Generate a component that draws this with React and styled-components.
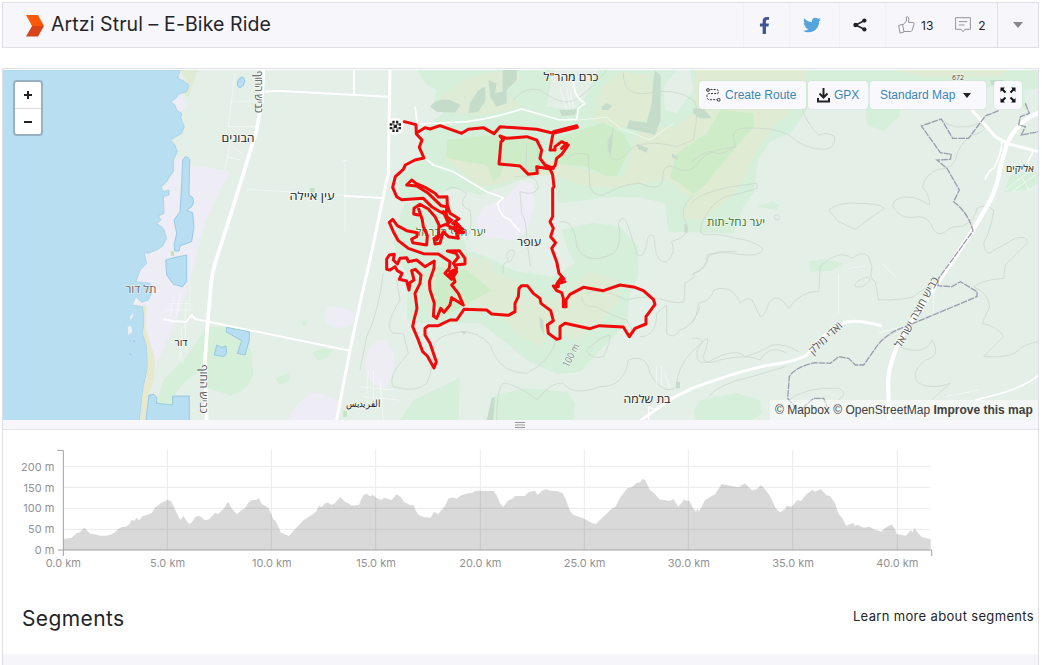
import React from "react";
import styled, { createGlobalStyle } from "styled-components";
import { FaFacebookF, FaTwitter } from "react-icons/fa";

const GlobalStyle = createGlobalStyle`
  * {
    box-sizing: border-box;
  }

  body {
    margin: 0;
    background: #fff;
    color: #242428;
    font-family: Inter, "Liberation Sans", sans-serif;
  }
`;

const Page = styled.div`
  width: 1037px;
  height: 665px;
  margin-left: 2px;
  padding-top: 2px;
  overflow: hidden;
`;

const Header = styled.header`
  display: flex;
  height: 46px;
  background: #f7f7fb;
  border: 1px solid #dfdfe8;
`;

const Brand = styled.div`
  display: flex;
  flex: 1;
  align-items: center;
  padding: 0 0 3px 22px;

  svg {
    position: relative;
    top: 2px;
  }
`;

const Title = styled.h1`
  margin: 0 0 0 6px;
  font-size: 19.5px;
  font-weight: 400;
  line-height: 24px;
  letter-spacing: 0.1px;
  white-space: nowrap;
`;

const Action = styled.div`
  display: flex;
  align-items: center;
  justify-content: center;
  width: ${props => props.w}px;
  padding-right: ${props => props.shift || 0}px;
  border-left: 1px solid ${props => (props.strong ? "#dfdfe8" : "#f0f0f5")};
`;

const Kudos = styled(Action)`
  justify-content: flex-start;
  padding-left: 12px;
  font-size: 12px;

  svg + span {
    margin: 0 22px 0 6px;
  }

  svg ~ svg + span {
    margin: 0 0 0 7px;
  }
`;

const Panel = styled.section`
  margin-top: 20px;
  border: 1px solid #dfdfe8;
  border-bottom: 0;
`;

const MapBox = styled.div`
  position: relative;
  height: 351px;
  padding-top: 1px;

  > svg {
    display: block;
  }
`;

const ZoomControl = styled.div`
  position: absolute;
  top: 11px;
  left: 10px;
  width: 30px;
  background: #fff;
  border: 2px solid #96b1bf;
  border-radius: 4px;
`;

const ZoomButton = styled.div`
  display: flex;
  align-items: center;
  justify-content: center;
  height: 26px;
  border-top: ${props => (props.line ? "1px solid #ddd" : "0")};
`;

const MapTools = styled.div`
  position: absolute;
  top: 12px;
  right: 16px;
  display: flex;
`;

const ToolButton = styled.div`
  display: flex;
  align-items: center;
  width: ${props => props.w}px;
  height: 28px;
  margin-left: ${props => props.gap || 2}px;
  padding-left: ${props => props.pad}px;
  background: #f9f9fd;
  border-radius: 3px;
  box-shadow: 0 0 1px rgba(120, 130, 160, 0.4);
  color: #3a85b8;
  font: 12px "Liberation Sans", sans-serif;
  white-space: nowrap;

  svg + span {
    margin-left: 4px;
  }

  span + svg {
    margin-left: 8px;
  }
`;

const Attribution = styled.div`
  position: absolute;
  right: 0;
  bottom: 0;
  width: 268px;
  height: 20px;
  padding-left: 5px;
  background: rgba(255, 255, 255, 0.5);
  color: #404040;
  font: 12px/20px "Liberation Sans", sans-serif;
  white-space: nowrap;
`;

const Handle = styled.div`
  display: flex;
  align-items: center;
  justify-content: center;
  height: 10px;
  padding-right: 2px;
  background: #f7f7fb;
  border-bottom: 1px solid #e4e4ec;
`;

const Segments = styled.div`
  display: flex;
  justify-content: space-between;
  height: 74px;
  padding: 25px 4px 0 19px;
`;

const SegmentsTitle = styled.h2`
  margin: 0;
  font-size: 21px;
  font-weight: 400;
  line-height: 28px;
  letter-spacing: 0.4px;
`;

const LearnMore = styled.a`
  font-size: 13px;
  line-height: 22px;
  letter-spacing: 0.34px;
`;

const Footer = styled.div`
  height: 20px;
  background: #f6f6fa;
`;

const FullscreenIcon = () => (
  <svg width="16" height="16" viewBox="0 0 16 16" stroke="#111" strokeWidth="2" fill="#111">
    <path d="M2 2L5.5 5.5M14 2L10.5 5.5M2 14L5.5 10.5M14 14L10.5 10.5" />
    <path stroke="none" d="M.5 .5h4.5L.5 5zM15.5 .5h-4.5l4.5 4.5zM.5 15.5h4.5l-4.5-4.5zM15.5 15.5h-4.5l4.5-4.5z" />
  </svg>
);

const RouteIcon = () => (
  <svg width="15" height="14" viewBox="0 0 15 14" fill="none" stroke="#333" strokeWidth="1">
    <circle cx="2" cy="2" r="1.4" />
    <circle cx="12.7" cy="11.8" r="1.4" />
    <path strokeDasharray="2 1.2" d="M4.5 1.5H11Q13 2 12 5.5H3Q.5 6 1 9Q1 11 3 11.7H11" />
  </svg>
);

const DownloadIcon = () => (
  <svg width="13" height="15" viewBox="0 0 13 15" fill="none" stroke="#222" strokeWidth="2">
    <path d="M6.5 0V9.5M2.5 5.5L6.5 9.5L10.5 5.5" />
    <path d="M1 10V13.5H12V10" />
  </svg>
);

const ShareIcon = () => (
  <svg width="14" height="14" viewBox="0 0 15 15" fill="#222">
    <path d="M12 3L3 7.5L12 12" fill="none" stroke="#222" strokeWidth="1.7" />
    <circle cx="12.2" cy="2.8" r="2.3" />
    <circle cx="2.8" cy="7.5" r="2.5" />
    <circle cx="12.2" cy="12.2" r="2.3" />
  </svg>
);

const ThumbIcon = () => (
  <svg width="17" height="18" viewBox="0 0 17 18" fill="none" stroke="#94949a" strokeWidth="1">
    <path d="M.7 9.5L4.5 8.3L6 16L2 17.2ZM4.8 9L8.5 5L8.2 1.2Q9 .2 10.3 1.3Q11.3 3 10.5 6.4H15.2Q16.4 6.8 16 8.3L14 14.6Q13.5 15.5 12.5 15.5H6" />
  </svg>
);

const CommentIcon = () => (
  <svg width="16" height="16" viewBox="0 0 16 16" fill="none" stroke="#94949a" strokeWidth="1">
    <path d="M.6 .7H15.4V12.3H10L8 14.7L6 12.3H.6ZM3.8 4.6H12.2M3.8 8H9.5" />
  </svg>
);

// terrain is drawn at three units per pixel, one frame per sheet
const Sheet = ({ x, y, children }) => (
  <g transform={`translate(${x} ${y}) scale(${1 / 3})`}>{children}</g>
);

const Coast = () => (
  <Sheet x={0} y={140}>
    <path fill="#eeecf4" d="M525 60L550 50L570 75L620 80L690 95L660 150L620 240L590 340L570 420L555 470L520 560L480 650L465 670L450 600L430 580L430 500L400 495L408 470L408 425L420 390L430 330L490 320L490 290L470 240L480 160L520 100Z" />
    <path fill="#eeecf4" d="M980 550Q980 515 1010 505Q1045 500 1065 530Q1060 560 1030 562Q1000 565 980 550ZM865 840Q880 790 940 757Q1000 770 1030 790L1012 840ZM512 -115L530 -140L550 -130L560 -100L540 -80Z" />
    <path fill="#dfead2" d="M540 -210H592L580 -170L565 -130L550 -140L567 -165Z" />
    <path fill="#d5efd8" d="M470 790L490 720L560 650L600 590L622 560L615 680L560 720L518 768V795ZM622 560L730 560L755 640L760 700Q740 760 690 765L622 745ZM935 640L970 625L1000 630L985 650L955 662ZM825 715L870 698L865 725L840 735ZM905 545L920 540V555L908 558Z" />
    <path fill="#c2e4bd" d="M930 144H944V158H930ZM512 335L522 332V348H514ZM1030 812H1040V830H1030Z" />
    <path fill="#b7def1" stroke="#9dcbe3" strokeWidth="2" d="M0 -210H540L533 -185L550 -178L567 -165L560 -145L535 -138L528 -125L512 -115L525 -105L530 -90L545 -80L543 -65L553 -40L545 -20L520 -5L512 0L525 15L532 35L520 60V95L508 110L500 125L483 140L490 155L507 150V165L490 170L492 220L475 228L483 240L470 250L490 265L500 295L488 318L470 330L445 340L432 338L440 370L420 390L408 425L450 430L455 460L445 480L425 487L408 472L398 495L428 500L432 540L428 580L440 620L443 680L430 740L425 790L418 845H0Z" />
    <path fill="#e6e9cd" d="M430 492L440 500L436 560L450 610L464 650L462 720L447 760L435 840H420L428 760L443 690L442 620L430 585L434 540Z" />
    <path fill="#f0f0f4" d="M390 530L402 518L397 532L390 540ZM383 560L393 558L397 575L385 585ZM398 495L408 472L425 490Z" />
    <g fill="#b7def1" stroke="#7fbbdf" strokeWidth="2">
      <path d="M548 60Q558 42 569 58L567 165Q590 175 575 200L560 212L578 218L582 260L575 305L540 318L537 333L524 333L522 315L530 280L522 240L540 215L545 130Z" />
      <path d="M497 360L525 352L560 345V425L548 440L520 433L500 405Z" />
      <path d="M447 765L462 763L470 772V790L518 795V768H568V845H437Z" />
      <path d="M680 562L748 575V600L735 645L712 640L725 602L678 575ZM650 615L664 622L678 618L680 640L672 650L643 645Z" />
      <ellipse cx="723" cy="-173" rx="10" ry="16" transform="rotate(20 723 -173)" />
      <path d="M389 602L394 605M400 600L405 607M388 640L395 645" />
    </g>
    <g fill="none" stroke="#fff">
      <path strokeWidth="2" opacity=".7" d="M740 148L1035 166M1035 60V275M1026 62H1042M705 -200L685 -40M690 -115H790M685 -40H770M690 10L675 90M700 20L725 40M680 50L720 60M520 470L510 530M540 460L530 530M560 480L555 540M500 490H570M495 510H580M545 560L540 660M555 550L560 640M535 600L550 670M570 430V510" />
      <path strokeWidth="6" d="M490 538L520 544L558 545L575 525L585 537L630 546L1050 632M795 -145L830 -148L1165 -130M1062 -210V-135M1035 168L1150 174" />
      <circle cx="1036" cy="168" r="4" fill="#fff" />
      <path strokeWidth="11" strokeLinejoin="round" d="M790 -210L786 -120L770 -30L735 85L690 230L645 370Q632 420 631 460L622 560L615 660L620 845" />
      <path strokeWidth="9" strokeLinejoin="round" d="M1170 -210L1165 100L1148 180L1110 360L1080 490L1050 630L1010 840" />
    </g>
  </Sheet>
);

const Hills = () => (
  <Sheet x={340} y={60}>
    <path fill="#d5efdb" d="M230 30L260 75L290 90L280 130L310 160L255 200L240 300L175 350L180 410L260 440L300 400L345 385L420 405L540 360L640 340L655 430L740 420L800 410L900 412L975 430L985 515L1180 520L1210 440L1240 400L1255 300L1290 245L1350 220L1400 150L1430 80H1970L2060 150L2050 90L2096 85V30H980L960 70L990 140L1010 100L1080 30Z" />
    <path fill="#e4efe8" d="M640 30H775L730 120L700 150L620 140ZM970 80L1010 30H1050L1060 90L1010 160L975 150ZM1420 90H1960V260H1400Z" />
    <path fill="#d5efdb" d="M1576 130H1684L1676 170L1631 212L1581 195ZM195 430L320 410L360 490L380 570L440 590L520 632L640 650L705 610L680 560L665 510L760 488L840 500L895 560L895 650L870 700L860 790L790 860L720 935L650 942L560 900L500 850L420 790L250 790L200 780L205 650L180 600L160 550L175 480Z" />
    <path fill="#dfecd5" d="M380 590L450 600L465 640L535 660L520 740L580 700L640 720L700 670L750 635L830 660L840 720L770 800L700 840L640 800L600 860L540 830L460 750L380 745L260 740L250 640ZM300 110L370 60L430 40L530 30L545 60L480 90L550 140L440 165L330 160Z" />
    <path fill="#dfecd3" d="M310 290L440 280L640 300L760 340L850 350L880 260L900 200L1010 200L1070 150L1060 60L1070 30H1400L1380 130L1300 200L1250 270L1200 380L1150 430L1090 480L1030 475L1050 410L980 360L900 370L820 385L720 375L640 345L560 350L480 370L420 380Z" />
    <path fill="#dfecd3" d="M785 80L850 35L920 45L940 110L920 180L830 205L760 180ZM1620 20H2010L1980 50H1750Z" />
    <path fill="#ceecc7" d="M320 240L460 225L600 240L610 320L580 340L520 315L490 320L480 350L460 362L440 315L320 295ZM640 240L720 210L790 188L850 220L872 260L830 350L790 345L740 320L640 310ZM990 350L1010 280L1100 220L1140 150L1240 160L1240 200L1190 260L1130 330L1100 370L1060 402ZM290 620L380 630L455 690L370 740L300 770L280 700Z" />
    <path fill="#c6dccb" d="M945 32L962 45V180L945 225L925 220L860 205L868 180L920 188L935 130L940 60ZM415 90L435 80L437 120L415 155L385 160L390 130ZM445 60L470 70L465 100L488 95V30H530V60L500 90V130L470 140L450 110ZM270 140Q290 112 330 120L362 135L345 158L290 155ZM785 140L800 130L817 138L805 150H785ZM890 252L925 265L920 278L895 268ZM1058 145L1090 145L1115 175H1080L1060 160ZM658 150L710 148L705 165L665 168ZM803 240L818 220L812 285L803 270ZM995 280L1013 290V300L997 293ZM598 770L610 780L612 825L600 800ZM440 1080L455 1015L475 1005V1050L460 1080ZM1008 965H1020V985H1008ZM1033 490L1043 500V520L1033 515ZM363 812L380 815L372 824ZM1950 60H1990V75H1955Z" />
    <path fill="#eeecf4" d="M410 475L430 440L490 420L545 365L580 370L582 440L560 510L520 542L440 530L412 500ZM75 910Q90 835 130 840Q165 860 163 910Q155 975 125 985Q80 970 75 910ZM-40 740L20 745L42 760L40 785L15 795L-45 785Z" />
    <path fill="#d5efdb" d="M460 1080L465 1005L560 985L680 995L705 1030L700 1080ZM180 1080L220 1020L360 955L355 1080ZM1060 1055L1080 1020L1190 1000L1260 1020L1265 1060L1230 1085H1070Z" />
    <g fill="none" stroke="#c8d6ca" strokeWidth="2.2">
      <path d="M130 640Q115 760 80 830L60 930M170 660L180 720Q130 800 160 820H190L205 880Q140 950 160 980Q230 1000 260 970Q280 930 280 860Q290 820 380 815Q450 830 460 880Q490 940 560 940Q640 900 650 830" />
      <path d="M320 390Q340 370 380 400Q350 440 390 450Q400 500 380 540M560 250L558 330L600 330L590 260M525 350Q590 340 595 380Q590 410 540 395L545 460Q560 480 560 540L572 620M490 640Q485 600 510 605Q530 580 520 570Q490 570 505 605" />
      <path d="M470 1080Q470 960 500 970Q560 990 590 1020Q640 960 670 970Q700 1010 780 980Q855 980 865 900Q920 880 930 940Q970 1010 1010 980Q1010 920 1060 870L1100 835Q1110 830 1090 890Q1090 920 1140 900Q1220 880 1260 900Q1290 850 1340 880M520 120Q550 80 600 90Q680 150 720 110Q760 80 800 30M850 40Q850 110 920 100Q1000 80 1060 120Q1080 140 1060 240L1010 260Q940 240 880 260Q830 320 810 290L820 200" />
      <path d="M680 300Q700 270 745 285L750 380Q760 410 790 405Q850 370 900 370Q970 400 968 350Q970 310 1000 320Q1050 350 1080 300Q1100 270 1190 260M660 485Q705 480 710 560Q740 620 820 580Q850 550 835 490Q850 455 865 500L890 580Q910 610 925 530Q945 510 945 560Q950 610 980 605Q1010 580 995 545Q1050 530 1040 490Q1010 450 1060 405M725 710Q725 745 770 740Q820 770 860 780Q890 820 860 830M735 700Q780 680 860 720Q920 700 990 725Q1020 730 1032 725L1035 670Q1070 650 1060 640Q1100 630 1105 590Q1130 570 1190 575M900 830Q950 830 950 760L980 735V820Q1000 840 1020 810Q1060 800 1080 740M740 870Q780 830 810 825Q810 850 790 890Q750 900 740 870" />
    </g>
    <g fill="none" stroke="#fff" strokeLinejoin="round">
      <path strokeWidth="2" opacity=".8" d="M710 180L800 172L840 205L930 240L1000 190M660 80L680 150M680 80L690 145M690 90L700 140M85 930L80 1000M100 930V1040M120 960L130 1080M60 980L160 990M70 1010L180 1020M950 920V980M965 915V975M975 940L990 980" />
      <path strokeWidth="5" d="M240 192L380 185Q470 172 545 147L660 180L710 178L715 145L735 130Q700 110 700 60M250 290L280 315L340 335L440 395L490 413L472 430Q480 470 510 480L540 515M225 140L232 190" />
    </g>
  </Sheet>
);

const Plain = () => (
  <Sheet x={692} y={100}>
    <path fill="#d5efdb" d="M350 485L390 478L455 490L420 512L355 515ZM195 320L240 303L262 315L255 330ZM935 275L955 225L1040 215V250L1000 270Z" />
    <g fill="none" stroke="#c8d6ca" strokeWidth="2.2">
      <path d="M0 185Q50 140 70 160Q100 165 130 135Q110 90 150 85Q250 80 290 105Q340 150 400 148Q430 145 428 110Q410 95 380 105Q350 80 330 25" />
      <path d="M410 330Q440 305 500 310Q560 310 578 325L540 350L490 388L440 365ZM740 55Q790 100 860 70L878 85Q870 100 840 105Q800 130 790 180Q780 205 740 208Q700 220 692 260Q715 290 712 315Q660 280 620 295Q590 310 610 330Q630 360 680 350Q710 350 725 390Q740 410 760 395Q780 375 810 380Q850 360 855 325Q880 310 905 330Q900 380 875 430Q880 460 890 460L970 415Q1010 405 1005 430L975 460L940 495L935 535Q870 540 845 560Q890 580 893 620L870 670Q920 680 935 710L875 770Q960 775 980 750Q1000 730 1040 725" />
      <path d="M0 525Q50 500 45 465Q70 455 120 460Q210 475 213 445Q180 420 130 415Q90 400 40 405Q10 400 40 350Q60 310 100 290Q150 280 195 265V250Q100 260 60 275Q10 290 0 310M0 670Q15 650 20 610Q60 600 65 570Q120 550 145 610Q160 590 180 600L205 650Q215 655 230 610Q250 580 275 605L290 625Q330 570 380 575L385 500Q440 445 480 475Q510 450 530 470L540 500Q530 540 550 545L560 600Q640 600 665 590Q700 560 720 560" />
      <path d="M0 715Q50 710 15 750Q10 800 50 785Q130 740 160 770Q200 760 240 735Q280 730 320 755M490 560Q480 545 530 530Q540 545 510 560ZM620 740Q700 770 720 720Q750 770 700 780Q650 820 680 850Q720 870 775 850Q740 880 720 900M50 890Q80 850 180 830L280 800M290 900Q340 860 440 865Q470 880 440 900" />
      <circle cx="255" cy="352" r="8" />
    </g>
    <g fill="none" stroke="#fff" strokeLinejoin="round">
      <path strokeWidth="2" opacity=".8" d="M470 505L520 498M440 520V640M725 560V640M760 890L860 870M570 490L610 530M560 700Q580 690 640 680M940 270L1010 215M960 275L1030 225M990 230L1010 270" />
      <path strokeWidth="5" d="M930 120Q930 160 905 205Q885 215 880 240M1025 152L1005 190M850 900L920 882Q1000 860 1040 825" />
      <path strokeWidth="9" d="M840 30L910 110L945 130L1040 155M-155 962L-60 895L0 865Q120 820 220 797Q310 785 345 765Q390 700 450 670Q490 655 570 678" />
      <path strokeWidth="4" d="M-130 960V920L-110 930" />
      <path strokeWidth="13" d="M1040 38Q980 60 945 130L925 200Q915 270 890 310L843 390L740 545L640 690Q590 780 588 850L592 962" />
    </g>
    <path fill="none" stroke="#9a9dad" strokeWidth="4" strokeDasharray="20 3" d="M920 32L880 48L830 115H782L748 57L688 78L745 158L778 163L775 178L735 180L765 205L802 270L785 305Q830 340 843 393L740 535L738 557L780 560L805 545L855 575V590L640 680Q580 700 550 745L515 795H490L470 775L440 770L415 790L370 788Q310 800 292 830L287 895L320 935L365 895H395L405 920M1000 10L1012 40L985 50L980 75L1000 80L988 105L1040 95" />
  </Sheet>
);

const Ride = () => (
  <Sheet x={340} y={60}>
    <circle cx="166" cy="199" r="25" fill="#fff" />
    <g fill="#222" transform="translate(166 199)">
      <path d="M-9 -17H-2V-10H-9ZM2 -17H9V-10H2ZM-9 10H-2V17H-9ZM2 10H9V17H2ZM-17 -9H-10V-2H-17ZM-17 2H-10V9H-17ZM10 -9H17V-2H10ZM10 2H17V9H10ZM-5 -5H5V5H-5Z" />
      <path d="M-10 -10L-3 -10L-3 -4L-10 -3ZM10 -10L3 -10L3 -4L10 -3ZM-10 10L-3 10L-3 4L-10 3ZM10 10L3 10L3 4L10 3Z" opacity=".55" />
    </g>
    <g fill="none" stroke="#f00a0a" strokeWidth="9" strokeLinejoin="round" strokeLinecap="round">
      <path d="M193 185L228 194L229 222L246 240L238 262L252 294L225 300L196 315L190 328L166 350L158 382L170 410L185 419L250 415L275 440L300 455L320 465L325 485" />
      <path d="M200 375L215 360L228 370L255 382L285 400L295 411L321 410L322 435L330 460L357 476L338 490L368 507L345 512M200 375L230 378L265 400L303 437L320 440L318 470L335 480L320 495L370 518M310 455L325 490L300 500" />
      <path d="M235 465L221 462L222 445L240 433L265 447L285 470L297 495L295 530L282 535L285 552L300 550L310 515L325 530L355 535L350 520L372 516M236 447L247 480L250 500L262 527L260 555L218 548L215 537L230 530L232 518L200 512L172 497L158 478L148 487L160 515L175 542L205 565L250 581L295 582L330 605L328 625L315 640L335 658L350 635L345 615L375 612L375 595L358 572L322 573L348 580L355 592L340 610L350 625L335 650L330 635M340 650L345 665L335 675L355 700L370 735L335 713L330 735L312 757L302 745L290 775L280 768L283 730L270 690L268 665L282 625L283 603L255 620L230 600L205 605L200 593L180 595L172 612L160 600L163 583L148 585L140 597V628L150 630L165 620L172 632L186 640L178 658L200 663L207 690L210 668L222 660L215 632L226 628L243 645L240 670L225 700L231 745L222 780L218 800L235 840L248 875L262 888L282 924L289 905L270 850L255 825V805L265 797H295L330 780L350 780L372 748L440 750L455 762L505 766L525 755V730L535 710L537 685L545 677H562L580 700L600 715L603 730L632 752L640 782L622 795L625 820L650 838L660 835V800L675 790L750 806L778 797L850 801L868 830L885 805L918 792V770L945 733L940 718L910 692L885 682L840 675L790 692L730 682L690 703L678 720V740H670V715L665 698L650 692L640 678L655 680V665L672 657L657 640L650 605L635 565L647 548L632 530L640 505L630 485L638 470V385L642 380L638 345L630 325" />
      <path d="M233 217L255 203L270 207L300 197L365 220L385 208L430 203L462 221L480 200L590 208L640 220L712 202L710 197L640 215L630 270L645 270L645 260L665 245L685 255L665 283L650 295L645 318L630 327L590 320L592 340L565 343L540 318L477 312L483 245L490 240L480 228L500 235L560 230L590 240L605 270L600 295L615 315L640 325M665 265L680 250M675 665L650 672L662 655M340 630L325 645L345 640M345 485L360 500L330 505M290 540L300 525" />
    </g>
  </Sheet>
);

const MapLabel = styled.text`
  fill: ${props => props.$tone || "#222"};
  stroke: rgba(255, 255, 255, 0.5);
  stroke-width: 1.5px;
  paint-order: stroke;
  font: ${props => props.$size || 11}px "Open Sans", "Noto Sans", "Liberation Sans", sans-serif;
  text-anchor: middle;
`;

// text, x, y, width, rotation, colour, size
const places = [
  ['כרם מהר"ל', 571, 81, 55, 0, "#222", 11.5],
  ["הבונים", 238, 142, 33, 0],
  ["עין איילה", 312, 200, 45, 0],
  ["תל דור", 141, 293, 31, 0, "#80665a"],
  ["דור", 181, 346, 13, 0, "#222", 10],
  ["עופר", 529, 246, 24, 0],
  ["יער נחל-תות", 736, 226, 58, 0, "#39702a"],
  ["אליקים", 1020, 172, 28, 0, "#222", 10],
  ["בת שלמה", 647, 403, 47, 0],
  ["الفريديس", 363, 407, 35, 0, "#222", 10],
  ["100 m", 574, 357, 25, -62, "#858c87", 10],
  ["672", 958, 80, 12, 0, "#444", 8],
  ["כביש החוף", 255, 92, 42, 90, "#555"],
  ["כביש החוף", 200, 389, 49, 90, "#555"],
  ["ואדי מילק", 828, 341, 42, -43, "#555"],
  ["כביש חוצה ישראל", 920, 314, 79, -61, "#555"],
];

const RideMap = () => (
  <svg width="1035" height="350" viewBox="3 70 1035 350">
    <rect x="3" y="70" width="1036" height="350" fill="#e4efe8" />
    <Hills />
    <Plain />
    <Coast />
    <MapLabel x="451" y="236" textLength="70" $tone="#39702a">יער חוף הכרמל</MapLabel>
    <Ride />
    {places.map(([name, x, y, width, turn, tone, size], i) => (
      <MapLabel
        key={i}
        x={x}
        y={y}
        textLength={width}
        lengthAdjust="spacingAndGlyphs"
        transform={`rotate(${turn} ${x} ${y})`}
        $tone={tone}
        $size={size}
      >
        {name}
      </MapLabel>
    ))}
  </svg>
);

const profile =
  "190,327 215,323 230,310 240,307 250,295 255,295 270,311 285,313 300,317 320,317 335,313 345,307 355,297 365,291 378,290 388,282 395,270 403,272 409,263 418,271 427,259 455,250 465,233 482,220 503,209 513,213 522,232 532,252 541,270 550,258 560,273 568,282 577,275 585,262 597,257 607,263 615,271 627,268 645,248 655,252 672,235 684,215 695,235 710,252 722,243 735,233 745,218 755,210 768,210 777,205 785,222 805,233 813,250 820,268 827,272 835,290 843,308 867,318 880,303 910,271 935,255 948,245 957,228 965,231 975,220 985,218 995,225 1005,219 1021,201 1035,215 1045,220 1055,227 1077,225 1083,210 1090,196 1100,191 1110,199 1118,194 1130,204 1145,210 1152,203 1175,210 1190,193 1203,202 1212,216 1232,226 1240,224 1248,243 1256,255 1270,261 1292,263 1302,245 1314,253 1325,240 1335,228 1345,206 1357,202 1370,206 1385,195 1405,190 1418,188 1427,182 1480,183 1490,196 1500,220 1510,230 1525,211 1535,208 1545,198 1575,198 1585,186 1605,182 1613,195 1625,183 1638,177 1650,182 1670,183 1688,190 1698,210 1710,243 1720,254 1740,262 1753,266 1775,279 1788,282 1805,265 1835,236 1847,230 1860,203 1882,175 1895,172 1910,158 1918,158 1928,147 1935,149 1950,180 1965,192 1978,208 2010,213 2020,207 2035,230 2053,208 2060,212 2068,212 2078,232 2088,246 2093,235 2097,245 2115,210 2145,193 2165,162 2180,165 2215,172 2235,160 2255,180 2270,178 2283,165 2297,180 2310,198 2327,235 2340,247 2355,238 2360,227 2375,230 2392,210 2402,214 2417,195 2438,179 2445,185 2462,177 2480,196 2490,198 2505,220 2515,250 2528,266 2538,287 2560,279 2565,288 2572,284 2590,293 2608,290 2620,297 2643,305 2655,294 2675,283 2685,297 2690,312 2718,317 2732,300 2738,307 2743,294 2752,306 2765,321 2792,328";

const ChartSvg = styled.svg`
  display: block;
`;

const AxisText = styled.text`
  fill: #929296;
  font: 33px Inter, sans-serif;
`;

const Elevation = () => (
  <ChartSvg width="1035" height="150" viewBox="9 0 3105 450">
    {[109, 172, 235, 298].map(y => (
      <path key={y} d={`M190 ${y}H2792`} stroke="#ebebeb" strokeWidth="3" />
    ))}
    {[502, 814, 1127, 1441, 1753, 2065, 2378, 2692].map(x => (
      <path key={x} d={`M${x} 60V360`} stroke="#ebebeb" strokeWidth="3" />
    ))}
    <polygon points={`${profile} 2792,360 190,360`} fill="rgba(0, 0, 0, 0.15)" />
    <path d="M172 61H190V378M174 360H2795V378" fill="none" stroke="#a2a2a2" strokeWidth="3" />
    {["200 m", "150 m", "100 m", "50 m", "0 m"].map((label, i) => (
      <AxisText key={label} x="163" y={122 + i * 62.5} textAnchor="end">{label}</AxisText>
    ))}
    {[0, 5, 10, 15, 20, 25, 30, 35, 40].map(km => (
      <AxisText key={km} x={190 + km * 62.55} y="411" textAnchor="middle">{km.toFixed(1)} km</AxisText>
    ))}
  </ChartSvg>
);

const App = () => (
  <>
    <GlobalStyle />
    <Page>
      <Header>
        <Brand>
          <svg width="20" height="22" viewBox="0 0 20 22">
            <path fill="#fc5a0a" d="M1 0H13L19 11H7Z" />
            <path fill="#d8431c" d="M7 11H19L13 21.5H1Z" />
          </svg>
          <Title>Artzi Strul – E-Bike Ride</Title>
        </Brand>
        <Action w={46} shift={5}><FaFacebookF size={17} color="#3f5596" /></Action>
        <Action w={50} shift={6}><FaTwitter size={18} color="#55a4dc" /></Action>
        <Action w={46} shift={6}><ShareIcon /></Action>
        <Kudos w={112}>
          <ThumbIcon />
          <span>13</span>
          <CommentIcon />
          <span>2</span>
        </Kudos>
        <Action w={41} strong>
          <svg width="10" height="6"><path d="M0 0H10L5 6Z" fill="#888" /></svg>
        </Action>
      </Header>
      <Panel>
        <MapBox>
          <RideMap />
          <ZoomControl>
            <ZoomButton>
              <svg width="8" height="8"><path d="M4 0V8M0 4H8" stroke="#222" strokeWidth="2" /></svg>
            </ZoomButton>
            <ZoomButton line>
              <svg width="8" height="8"><path d="M0 4H8" stroke="#222" strokeWidth="2" /></svg>
            </ZoomButton>
          </ZoomControl>
          <MapTools>
            <ToolButton w={107} pad={7}><RouteIcon /><span>Create Route</span></ToolButton>
            <ToolButton w={60} pad={9}><DownloadIcon /><span>GPX</span></ToolButton>
            <ToolButton w={116} pad={10}>
              <span>Standard Map</span>
              <svg width="8" height="5"><path d="M0 0H8L4 5Z" fill="#222" /></svg>
            </ToolButton>
            <ToolButton w={28} pad={6} gap={8}><FullscreenIcon /></ToolButton>
          </MapTools>
          <Attribution>© Mapbox © OpenStreetMap <b>Improve this map</b></Attribution>
        </MapBox>
        <Handle>
          <svg width="10" height="6"><path d="M0 .5H10M0 3H10M0 5.5H10" stroke="#999" /></svg>
        </Handle>
        <Elevation />
        <Segments>
          <SegmentsTitle>Segments</SegmentsTitle>
          <LearnMore>Learn more about segments</LearnMore>
        </Segments>
        <Footer />
      </Panel>
    </Page>
  </>
);

export default App;
